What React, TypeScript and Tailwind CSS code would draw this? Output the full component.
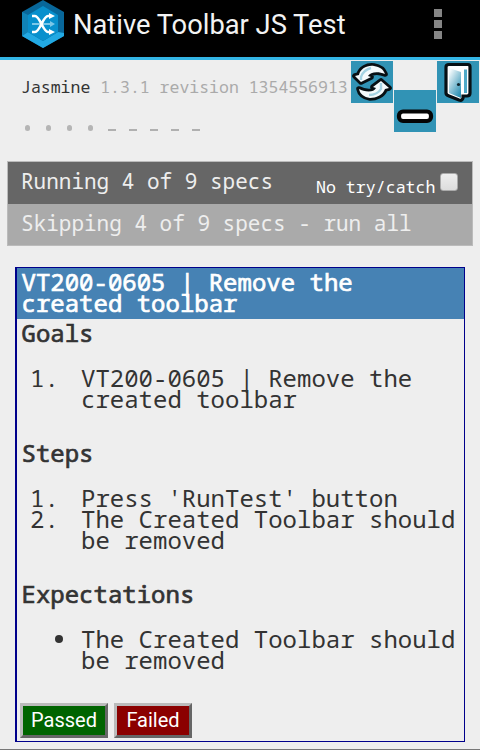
import React from 'react';

const mono = "font-['Droid_Sans_Mono','Noto_Sans_Mono','DejaVu_Sans_Mono',monospace]";
const heavy = 'font-normal [-webkit-text-stroke:0.7px_currentColor]';

function AppLogo() {
  return (
    <svg width="42" height="48" viewBox="0 0 42 48" className="block">
      <path d="M21 0 42 12V36L21 48 0 36V12Z" fill="#08679a" />
      <path d="M0 12 6 15V32L0 36Z" fill="#1083b7" />
      <path d="M0 36 6 32 21 41 36 32 42 33V36L21 48 0 36Z" fill="#22a9e3" />
      <path d="M21 6 36 15V32L21 41 6 32V15Z" fill="#0890cd" />
      <path d="M10 24H29" stroke="#7bc7e8" strokeWidth="2" />
      <path d="M28 21 33 24 28 27Z" fill="#7bc7e8" />
      <path d="M10 16H13C18 16 21 32 26 32H29M10 32H13C18 32 21 16 26 16H29" fill="none" stroke="#fff" strokeWidth="2.6" />
      <path d="M27 13 33 16 27 19ZM27 29 33 32 27 35Z" fill="#fff" />
    </svg>
  );
}

function RefreshIcon() {
  const top = 'M10 21 4 15 8 14C9 8 16 4 23 5C29 6 32 8 34 13C27 10 19 11 17 15L20 16Z';
  const bottom = 'M30 20 38 27 34 28C32 34 25 37 19 37C13 36 9 33 8 28C13 31 23 32 25 27L22 26Z';
  return (
    <svg width="42" height="42" viewBox="0 0 42 42" className="block">
      <g stroke="#081014" strokeLinejoin="round" strokeWidth="5.6">
        <path d={top} /><path d={bottom} />
      </g>
      <g fill="#f4fafc">
        <path d={top} /><path d={bottom} />
      </g>
      <path d="M10 19V16C12 10 16 8 20 7M30 22V28C27 33 22 34 18 34" fill="none" stroke="#a4d3e3" strokeWidth="2.4" />
    </svg>
  );
}

function MinusIcon() {
  return (
    <svg width="42" height="42" viewBox="0 0 42 42" className="block">
      <rect x="5" y="21.5" width="32" height="9.5" rx="4" fill="#fff" stroke="#050505" strokeWidth="4.2" />
    </svg>
  );
}

function DoorIcon() {
  return (
    <svg width="42" height="42" viewBox="0 0 42 42" className="block">
      <defs>
        <linearGradient id="door" x1="0" y1="0" x2="0.7" y2="1">
          <stop offset="0.1" stopColor="#f6fbfd" />
          <stop offset="1" stopColor="#3193b5" />
        </linearGradient>
      </defs>
      <path d="M12 3.5H31Q33 3.5 33 6V32Q33 35 30 35H26V37Q25 40 22 39L12 35Q9 34 9 32V6Q9 3.5 12 3.5Z" fill="#fff" stroke="#071014" strokeWidth="3.2" />
      <path d="M12 7 24 11V37L12 32Z" fill="url(#door)" />
      <path d="M27 8.5H30V32H27Z" fill="#4fa9c8" />
      <circle cx="21.5" cy="23.5" r="1.6" fill="#10242c" />
    </svg>
  );
}

function Item({ marker, children }: { marker: string; children: React.ReactNode }) {
  return (
    <li className="flex">
      <span className="w-[51px] shrink-0 whitespace-pre">{marker}</span>
      <span className="whitespace-nowrap">{children}</span>
    </li>
  );
}

export default function App() {
  return (
    <div className={`relative flex h-[750px] w-[480px] flex-col overflow-hidden bg-[#eee] text-[#333] ${mono}`}>
      <header className="flex h-[60px] shrink-0 border-b-[3px] border-[#33b5e5] bg-black pl-[22px]">
        <AppLogo />
        <h1 className="ml-[9px] mt-[7px] w-[350px] whitespace-nowrap font-[Roboto,sans-serif] text-[27.3px] leading-[36px] text-[#f3f3f3]">Native Toolbar JS Test</h1>
        <div className="ml-[11px] mt-[9px] flex flex-col gap-[3px]">
          <i className="size-2 bg-[#858585]" /><i className="size-2 bg-[#858585]" /><i className="size-2 bg-[#858585]" />
        </div>
      </header>

      <div className="absolute left-[351px] top-[61px] bg-[#3193b5]"><RefreshIcon /></div>
      <div className="absolute left-[394px] top-[90px] bg-[#3193b5]"><MinusIcon /></div>
      <div className="absolute left-[437px] top-[61px] bg-[#3193b5]"><DoorIcon /></div>

      <div className="mt-[17px] h-[20px] whitespace-nowrap pl-[21px] text-[16.5px] leading-[20px]">
        Jasmine <span className="text-[#aaa]">1.3.1 revision 1354556913</span>
      </div>
      <div className="mt-[21px] flex h-[20px] pl-[17px]">
        {[0, 1, 2, 3].map((n) => (
          <span key={n} className="flex w-[21px] items-center justify-center"><i className="h-[6px] w-[5px] rounded-full bg-[#b5b5b5]" /></span>
        ))}
        {[4, 5, 6, 7, 8].map((n) => (
          <span key={n} className="flex w-[21px] items-center justify-center pt-[4px]"><i className="h-[2px] w-[8px] bg-[#b0b0b0]" /></span>
        ))}
      </div>

      <section className="ml-[7px] mt-[23px] w-[466px] shrink-0 border border-[#bbb] text-[21px] text-[#eee]">
        <div className="flex h-[42px] bg-[#666] pl-[13px] leading-[38px]">
          <span className="w-[295px] whitespace-nowrap">Running 4 of 9 specs</span>
          <span className="mt-[6px] whitespace-nowrap text-[16.6px] text-white">No try/catch</span>
          <i className="ml-[5px] mt-[11px] size-[18px] rounded-[3px] border border-[#aaa] bg-linear-to-b from-[#eee] to-[#ddd]" />
        </div>
        <div className="h-[41px] whitespace-nowrap bg-[#aaa] pl-[13px] leading-[38px]">Skipping 4 of 9 specs - run all</div>
      </section>

      <section className="ml-[15px] mt-[21px] h-[475px] w-[450px] shrink-0 border border-l-2 border-[#00008b] text-[24px] leading-[21px]">
        <h2 className={`h-[51px] bg-[#4682b4] pl-[4.5px] pt-[3px] text-white ${heavy}`}>VT200-0605 | Remove the<br />created toolbar</h2>
        <h3 className={`mt-[3px] pl-[4.5px] ${heavy}`}>Goals</h3>
        <ol className="mt-[24px] pl-[13px]">
          <Item marker="1.">VT200-0605 | Remove the<br />created toolbar</Item>
        </ol>
        <h3 className={`mt-[33px] pl-[4.5px] ${heavy}`}>Steps</h3>
        <ol className="mt-[24px] pl-[13px]">
          <Item marker="1.">Press 'RunTest' button</Item>
          <Item marker="2.">The Created Toolbar should<br />be removed</Item>
        </ol>
        <h3 className={`mt-[33px] pl-[4.5px] ${heavy}`}>Expectations</h3>
        <ul className="mt-[24px] flex pl-[38px]">
          <li className="flex">
            <i className="mr-[18px] mt-[7px] size-[8px] shrink-0 rounded-full bg-[#333]" />
            <span className="whitespace-nowrap">The Created Toolbar should<br />be removed</span>
          </li>
        </ul>
        <div className="mt-[33px] flex gap-[6px] pl-[3px] font-[Roboto,sans-serif] text-[20px] leading-[27px] text-white">
          <button className="h-[35px] w-[88px] border-[3px] border-b-[#666] border-l-[#bbb] border-r-[#666] border-t-[#bbb] bg-[#006400]">Passed</button>
          <button className="h-[35px] w-[78px] border-[3px] border-b-[#666] border-l-[#bbb] border-r-[#666] border-t-[#bbb] bg-[#8b0000]">Failed</button>
        </div>
      </section>
      <div className="mt-auto h-px shrink-0 bg-[#777]" />
    </div>
  );
}
